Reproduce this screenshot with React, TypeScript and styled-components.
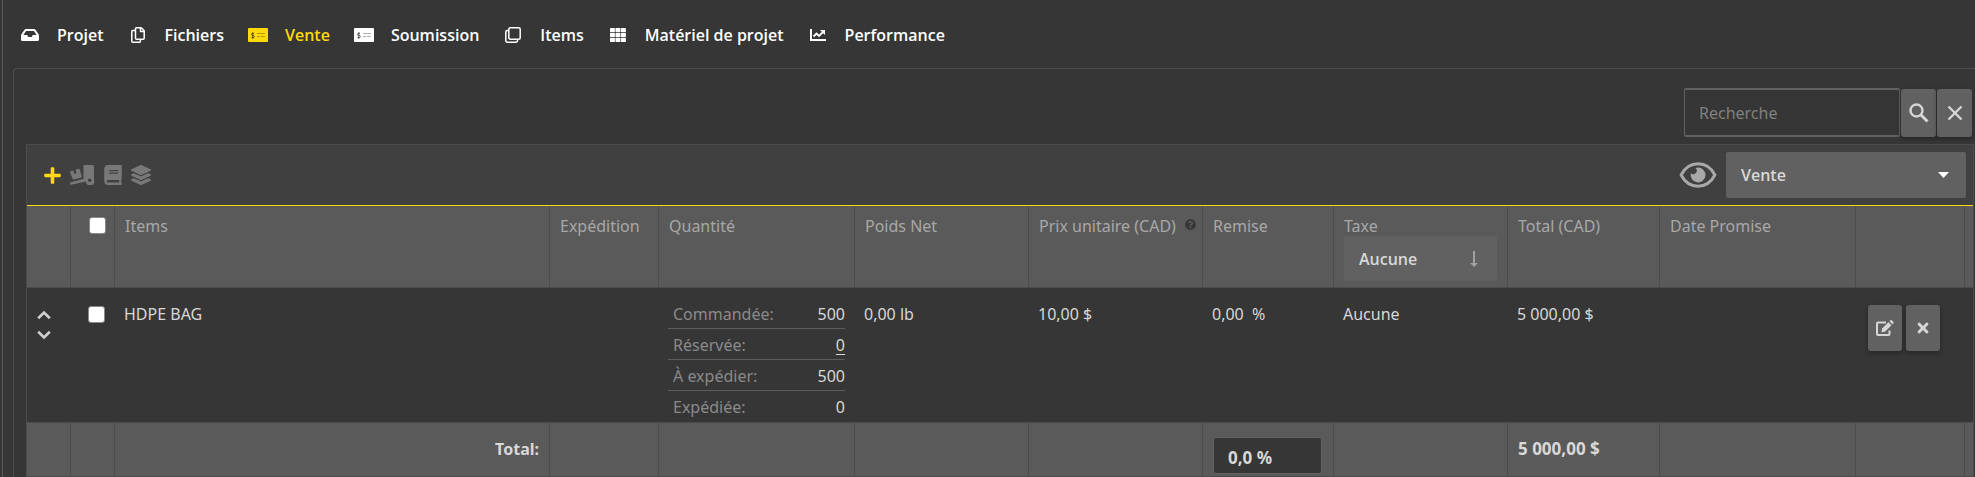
import React, { useState } from "react";
import styled, { createGlobalStyle, css } from "styled-components";
import { FaInbox, FaBook, FaLayerGroup, FaPlus, FaTimes, FaQuestionCircle } from "react-icons/fa";

const GlobalStyle = createGlobalStyle`
  *, *::before, *::after { box-sizing: border-box; }
  body {
    margin: 0;
    background: #363636;
    color: #d8d8d8;
    font-family: "Noto Sans", "Open Sans", sans-serif;
    font-size: 16px;
    line-height: 24px;
    overflow-x: hidden;
  }
  button, input, select { font: inherit; color: inherit; }
`;

const Page = styled.div`
  margin-left: 2px;
  border-left: 1px solid #5c5c5c;
  padding: 8px 0 0 10px;
  min-height: 100vh;
`;

const Tabs = styled.nav`
  display: flex;
  height: 60px;
  padding-bottom: 6px;
  align-items: center;
`;

const Tab = styled.a<{ $active?: boolean }>`
  display: flex;
  align-items: center;
  padding-right: 17px;
  color: ${(p) => (p.$active ? "#ffd90a" : "#ffffff")};
  font-family: "Open Sans", "Noto Sans", sans-serif;
  font-weight: 600;
  text-decoration: none;
  white-space: nowrap;
`;

const TabIcon = styled.span`
  display: flex;
  width: 34px;
  margin-right: 10px;
  justify-content: center;
`;

const Panel = styled.main`
  border: 1px solid #4c4c4c;
  border-right: 0;
  border-bottom: 0;
  border-top-left-radius: 4px;
  padding: 19px 1px 0 12px;
`;

const SearchForm = styled.form`
  display: flex;
  align-items: flex-end;
  justify-content: flex-end;
  gap: 1px;
  padding-right: 2px;
  margin-bottom: 7px;
`;

const SearchInput = styled.input`
  width: 216px;
  height: 49px;
  padding: 0 14px;
  border: 1px solid #616161;
  border-width: 2px 1px;
  border-radius: 2px;
  background: #363636;
  &::placeholder { color: #808080; opacity: 1; }
`;

const GreyButton = styled.button<{ $row?: boolean }>`
  display: flex;
  width: ${(p) => (p.$row ? 34 : 35)}px;
  height: ${(p) => (p.$row ? 46 : 48)}px;
  align-items: center;
  justify-content: center;
  padding: 0;
  border: 0;
  border-radius: 3px;
  background: #616161;
  color: #d6d6d6;
  box-shadow: 0 2px 5px rgba(0, 0, 0, 0.3);
  cursor: pointer;
`;

const Box = styled.section`
  border: 1px solid #4c4c4c;
  border-bottom: 0;
  background: #404040;
`;

const Toolbar = styled.header`
  display: flex;
  height: 61px;
  align-items: center;
  justify-content: space-between;
  padding: 0 7px 0 16px;
  border-bottom: 1px solid #ffd90a;
`;

const Tools = styled.div`
  display: flex;
  align-items: center;
  gap: 8px;
`;

const Tool = styled.button<{ $accent?: boolean }>`
  display: flex;
  padding: 0;
  border: 0;
  background: none;
  color: ${(p) => (p.$accent ? "#ffd90a" : "#787878")};
  cursor: pointer;
`;

const View = styled.div`
  display: flex;
  align-items: center;
  gap: 9px;
`;

const SelectWrap = styled.label<{ $wide?: boolean }>`
  display: grid;
  width: ${(p) => (p.$wide ? "240px" : "153px")};
  height: ${(p) => (p.$wide ? 46 : 45)}px;
  align-items: center;
  border-radius: 2px;
  background: #616161;
  > * { grid-area: 1 / 1; }
  > svg {
    justify-self: end;
    margin-right: ${(p) => (p.$wide ? 17 : 19)}px;
    pointer-events: none;
  }
`;

const Select = styled.select`
  width: 100%;
  height: 100%;
  padding: 0 15px;
  border: 0;
  background: transparent;
  color: #d8d8d8;
  font-family: "Open Sans", "Noto Sans", sans-serif;
  font-weight: 600;
  appearance: none;
  option { background: #616161; }
`;

const Table = styled.table`
  width: 100%;
  table-layout: fixed;
  border-collapse: separate;
  border-spacing: 0;
`;

const bar = css`
  background: #5a5a5a;
  border-right: 1px solid #4b4b4b;
  border-bottom: 1px solid #4b4b4b;
  &:last-child { border-right: 0; }
`;

const Head = styled.th`
  ${bar}
  height: 82px;
  padding: 10px 10px 0;
  color: #a8a8a8;
  font-weight: 400;
  line-height: 20px;
  text-align: left;
  vertical-align: top;
  white-space: nowrap;
`;

const Cell = styled.td<{ $list?: boolean }>`
  height: 135px;
  padding: ${(p) => (p.$list ? 10 : 14)}px 10px 0 9px;
  border-bottom: 1px solid #4b4b4b;
  background: #363636;
  vertical-align: top;
  white-space: nowrap;
`;

const Foot = styled.td<{ $right?: boolean; $figure?: boolean }>`
  ${bar}
  height: 54px;
  padding: 14px 10px 0;
  font-size: ${(p) => (p.$figure ? 17 : 16)}px;
  font-weight: 700;
  text-align: ${(p) => (p.$right ? "right" : "left")};
  vertical-align: top;
  white-space: nowrap;
`;

const Check = styled.input`
  display: block;
  width: 17px;
  height: 17px;
  margin: 4px 0 0 8px;
  appearance: none;
  border: 1px solid #8a8a8a;
  border-radius: 3px;
  background: #ffffff;
  &:checked { background: #ffd90a; }
`;

const HeadCheck = styled(Check)`
  margin-top: 1px;
`;

const Hint = styled.span`
  display: inline-flex;
  margin-left: 9px;
  color: #363636;
  vertical-align: 2px;
`;

const MoveButtons = styled.div`
  display: flex;
  flex-direction: column;
  align-items: flex-start;
  gap: 10px;
  padding: 8px 0 0 1px;
`;

const MoveButton = styled.button`
  display: flex;
  padding: 0;
  border: 0;
  background: none;
  color: #d0d0d0;
  cursor: pointer;
`;

const Quantities = styled.dl`
  margin: 0;
`;

const Quantity = styled.div`
  display: flex;
  height: 31px;
  justify-content: space-between;
  padding-left: 5px;
  border-bottom: 1px solid #5c5c5c;
  line-height: 32px;
  &:last-child { border-bottom: 0; }
  dt { color: #8a8a8a; }
  dd { margin: 0; }
  a { color: inherit; text-underline-offset: 3px; }
`;

const Actions = styled.div`
  display: flex;
  gap: 4px;
  padding: 3px 0 0 3px;
`;

const DiscountInput = styled.input`
  display: block;
  width: 109px;
  height: 37px;
  padding: 4px 14px 0;
  border: 1px solid #616161;
  border-radius: 3px;
  background: #363636;
  font-weight: 700;
`;

const Files = () => (
  <svg width="14" height="16" viewBox="0 0 14 16" fill="none" stroke="currentColor" strokeWidth="1.500" strokeLinejoin="round">
    <path d="M5.500.800h4.700l3 3v7.400a1 1 0 0 1-1 1H5.500a1 1 0 0 1-1-1V1.800a1 1 0 0 1 1-1z" />
    <path d="M9.500 1v3.500H13" />
    <path d="M4.300 3.500H1.800a1 1 0 0 0-1 1v9.700a1 1 0 0 0 1 1h6.600a1 1 0 0 0 1-1v-1.700" />
  </svg>
);

const MoneyCheck = () => (
  <svg width="20" height="14" viewBox="0 0 20 14">
    <path fill="currentColor" d="M1 0h18a1 1 0 0 1 1 1v12a1 1 0 0 1-1 1H1a1 1 0 0 1-1-1V1a1 1 0 0 1 1-1z" />
    <path fill="none" stroke="#363636" strokeOpacity="0.75" d="M6 5.500H4.500a1 1 0 0 0 0 2h.8a1 1 0 0 1 0 2H3.500M4.800 4v7" />
    <path stroke="#363636" strokeOpacity="0.4" d="M9 5.500h8M9 8.500h3M13 8.500h4" />
  </svg>
);

const Squares = () => (
  <svg width="16" height="16" viewBox="0 0 16 16" fill="none" stroke="currentColor" strokeWidth="1.500">
    <rect x="3.800" y="0.800" width="11.400" height="11.400" rx="1.500" />
    <path d="M3.500 3.500H2.300A1.500 1.500 0 0 0 .8 5v8.700a1.500 1.500 0 0 0 1.500 1.500H11a1.500 1.500 0 0 0 1.500-1.500v-1.200" />
  </svg>
);

const Grid = () => (
  <svg width="16" height="14" viewBox="0 0 16 14" fill="currentColor">
    {[0, 4.9, 9.8].map((y) => [0, 5.5, 11].map((x) => <rect key={`${x}-${y}`} x={x} y={y} width="4.900" height="4.200" rx="0.400" />))}
  </svg>
);

const Chart = () => (
  <svg width="16" height="12" viewBox="0 0 16 12" fill="none" stroke="currentColor">
    <path strokeWidth="2" d="M1 0v11h15" />
    <path strokeWidth="1.800" d="M3.500 7.500 6.500 4.500 9 7l4-4" />
    <path fill="currentColor" stroke="none" d="M10 1h5v5z" />
  </svg>
);

const Search = () => (
  <svg width="20" height="20" viewBox="0 0 20 20" fill="none" stroke="currentColor">
    <circle cx="7.500" cy="7.500" r="6" strokeWidth="2.400" />
    <path strokeWidth="3" d="m12 12 6.500 6.500" />
  </svg>
);

const Clear = () => (
  <svg width="16" height="16" viewBox="0 0 16 16" fill="none" stroke="currentColor" strokeWidth="2.400">
    <path d="m1.500 1.500 13 13M14.500 1.500l-13 13" />
  </svg>
);

const Truck = () => (
  <svg width="25" height="20" viewBox="0 0 25 20">
    <path fill="currentColor" d="M14.500 0H22a2 2 0 0 1 2 2v12.500a4.300 4.300 0 1 1-8.200 2L1.200 19.800a.8.800 0 0 1-1-.6l-.2-1a.8.800 0 0 1 .6-1L13.500 14V1a1 1 0 0 1 1-1z" />
    <circle cx="19.700" cy="15.200" r="1.700" fill="#404040" />
    <path fill="currentColor" d="m.5 6.300 2.700-.7 1 3.600 2.300-1.200-1-3.300 3.200-.9a.9.900 0 0 1 1.100.6l1.900 6.900a.9.900 0 0 1-.6 1.100l-7.300 2a.9.900 0 0 1-1.100-.6L0 7.300a.8.800 0 0 1 .5-1z" />
  </svg>
);

const Eye = () => (
  <svg width="38" height="26" viewBox="0 0 40 28" fill="none">
    <path stroke="#a8a8a8" strokeWidth="3.200" strokeLinejoin="round" d="M1.800 14C6 6 12.500 2 20 2s14 4 18.200 12C34 22 27.500 26 20 26S6 22 1.800 14z" />
    <path fill="#a8a8a8" d="M20 6a8 8 0 1 1-7.700 6.200 3.700 3.700 0 0 0 5-5.700A8 8 0 0 1 20 6z" />
  </svg>
);

const Caret = () => (
  <svg width="11" height="6" viewBox="0 0 11 6">
    <path fill="#ffffff" d="M0 0h11L5.500 6z" />
  </svg>
);

const ArrowDown = () => (
  <svg width="8" height="16" viewBox="0 0 8 16">
    <path fill="#a0a0a0" d="M3 0h2v12h3l-4 4-4-4h3z" />
  </svg>
);

const Chevron = ({ down }: { down?: boolean }) => (
  <svg width="14" height="10" viewBox="0 0 14 10" fill="none" stroke="currentColor" strokeWidth="2.600">
    <path d={down ? "M1.200 1.800 7 7.500l5.800-5.700" : "M1.200 8.200 7 2.500l5.800 5.700"} />
  </svg>
);

const Edit = () => (
  <svg width="18" height="16" viewBox="0 0 18 16">
    <path fill="none" stroke="currentColor" strokeWidth="2" d="M10 2.500H2a1 1 0 0 0-1 1V14a1 1 0 0 0 1 1h10.500a1 1 0 0 0 1-1v-3.500" />
    <path fill="currentColor" d="m6 8.500 6.500-6.300 3 3L9 11.700l-3.500.5zM13.400 1.300l1-1a1 1 0 0 1 1.300 0l1.700 1.700a1 1 0 0 1 0 1.300l-1 1z" />
  </svg>
);

const tabs = [
  { label: "Projet", icon: <FaInbox size={18} /> },
  { label: "Fichiers", icon: <Files /> },
  { label: "Vente", icon: <MoneyCheck />, active: true },
  { label: "Soumission", icon: <MoneyCheck /> },
  { label: "Items", icon: <Squares /> },
  { label: "Matériel de projet", icon: <Grid /> },
  { label: "Performance", icon: <Chart /> },
];

const columns = [44, 44, undefined, 109, 196, 174, 174, 131, 174, 152, 196, 109, 8];

const quantities = [
  { label: "Commandée:", value: "500" },
  { label: "Réservée:", value: "0", link: true },
  { label: "À expédier:", value: "500" },
  { label: "Expédiée:", value: "0" },
];

export default function App() {
  const [query, setQuery] = useState("");
  const [discount, setDiscount] = useState("0,0 %");
  return (
    <>
      <GlobalStyle />
      <Page>
        <Tabs>
          {tabs.map((t) => (
            <Tab key={t.label} href="#" $active={t.active}>
              <TabIcon>{t.icon}</TabIcon>
              {t.label}
            </Tab>
          ))}
        </Tabs>
        <Panel>
          <SearchForm onSubmit={(e) => e.preventDefault()}>
            <SearchInput aria-label="Recherche" placeholder="Recherche" value={query} onChange={(e) => setQuery(e.target.value)} />
            <GreyButton aria-label="Rechercher"><Search /></GreyButton>
            <GreyButton type="button" aria-label="Effacer" onClick={() => setQuery("")}><Clear /></GreyButton>
          </SearchForm>
          <Box>
            <Toolbar>
              <Tools>
                <Tool $accent aria-label="Ajouter"><FaPlus size={19} /></Tool>
                <Tool aria-label="Expédier"><Truck /></Tool>
                <Tool aria-label="Catalogue"><FaBook size={20} /></Tool>
                <Tool aria-label="Grouper"><FaLayerGroup size={20} /></Tool>
              </Tools>
              <View>
                <Eye />
                <SelectWrap $wide>
                  <Select aria-label="Vue"><option>Vente</option></Select>
                  <Caret />
                </SelectWrap>
              </View>
            </Toolbar>
            <Table>
              <colgroup>
                {columns.map((w, i) => <col key={i} width={w} />)}
              </colgroup>
              <thead>
                <tr>
                  <Head />
                  <Head><HeadCheck type="checkbox" aria-label="Tout sélectionner" /></Head>
                  <Head>Items</Head>
                  <Head>Expédition</Head>
                  <Head>Quantité</Head>
                  <Head>Poids Net</Head>
                  <Head>Prix unitaire (CAD)<Hint><FaQuestionCircle size={11} /></Hint></Head>
                  <Head>Remise</Head>
                  <Head>
                    Taxe
                    <SelectWrap>
                      <Select aria-label="Taxe"><option>Aucune</option></Select>
                      <ArrowDown />
                    </SelectWrap>
                  </Head>
                  <Head>Total (CAD)</Head>
                  <Head>Date Promise</Head>
                  <Head />
                  <Head />
                </tr>
              </thead>
              <tbody>
                <tr>
                  <Cell>
                    <MoveButtons>
                      <MoveButton aria-label="Monter"><Chevron /></MoveButton>
                      <MoveButton aria-label="Descendre"><Chevron down /></MoveButton>
                    </MoveButtons>
                  </Cell>
                  <Cell><Check type="checkbox" aria-label="Sélectionner HDPE BAG" /></Cell>
                  <Cell>HDPE BAG</Cell>
                  <Cell />
                  <Cell $list>
                    <Quantities>
                      {quantities.map((q) => (
                        <Quantity key={q.label}>
                          <dt>{q.label}</dt>
                          <dd>{q.link ? <a href="#">{q.value}</a> : q.value}</dd>
                        </Quantity>
                      ))}
                    </Quantities>
                  </Cell>
                  <Cell>0,00 lb</Cell>
                  <Cell>10,00 $</Cell>
                  <Cell>0,00&nbsp; %</Cell>
                  <Cell>Aucune</Cell>
                  <Cell>5 000,00 $</Cell>
                  <Cell />
                  <Cell>
                    <Actions>
                      <GreyButton $row aria-label="Modifier"><Edit /></GreyButton>
                      <GreyButton $row aria-label="Supprimer"><FaTimes size={16} /></GreyButton>
                    </Actions>
                  </Cell>
                  <Cell />
                </tr>
              </tbody>
              <tfoot>
                <tr>
                  <Foot />
                  <Foot />
                  <Foot $right>Total:</Foot>
                  <Foot />
                  <Foot />
                  <Foot />
                  <Foot />
                  <Foot $figure>
                    <DiscountInput aria-label="Remise totale" value={discount} onChange={(e) => setDiscount(e.target.value)} />
                  </Foot>
                  <Foot />
                  <Foot $figure>5 000,00 $</Foot>
                  <Foot />
                  <Foot />
                  <Foot />
                </tr>
              </tfoot>
            </Table>
          </Box>
        </Panel>
      </Page>
    </>
  );
}
